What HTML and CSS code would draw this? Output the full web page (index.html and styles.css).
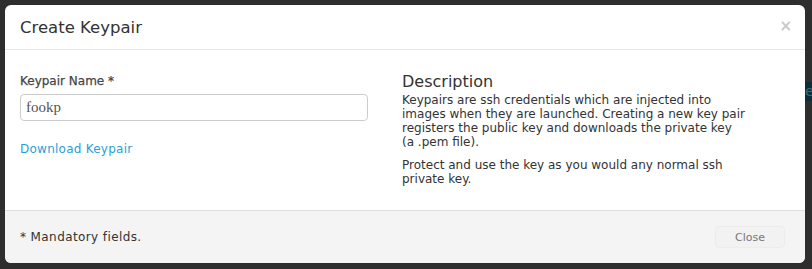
FILE: index.html
```html
<!DOCTYPE html>
<html lang="en">
<head>
    <meta charset="UTF-8">
    <meta name="viewport" content="width=device-width, initial-scale=1.0">
    <title>Create Keypair</title>
    <link rel="stylesheet" href="styles.css">
</head>
<body>

<div class="backdrop">
    <div class="behind-tab">e</div>
</div>

<div class="modal">
    <div class="modal-header">
        <h3>Create Keypair</h3>
        <a class="close" href="#">&times;</a>
    </div>
    <div class="modal-body">
        <div class="left">
            <div class="form-group">
                <label for="name">Keypair Name *</label>
                <input type="text" id="name" name="name" value="fookp">
            </div>
            <a class="download" href="#">Download Keypair</a>
        </div>
        <div class="right">
            <h3>Description</h3>
            <p>Keypairs are ssh credentials which are injected into<br>
                images when they are launched. Creating a new key pair<br>
                registers the public key and downloads the private key<br>
                (a .pem file).</p>
            <p>Protect and use the key as you would any normal ssh<br>
                private key.</p>
        </div>
    </div>
    <div class="modal-footer">
        <span class="note">* Mandatory fields.</span>
        <button class="btn">Close</button>
    </div>
</div>

</body>
</html>
```

FILE: styles.css
```css
body {
    font-family: "DejaVu Sans", Verdana, sans-serif;
    margin: 0;
    background-color: #2e2e2e;
    height: 269px;
    overflow: hidden;
    position: relative;
}

.backdrop {
    position: absolute;
    inset: 0;
}

.behind-tab {
    position: absolute;
    left: 805px;
    top: 82px;
    width: 7px;
    height: 19px;
    background: #0d2e38;
    color: #3b6b78;
    font-size: 14px;
    line-height: 19px;
}

.modal {
    position: relative;
    margin: 5px 0 0 5px;
    width: 800px;
    height: 258px;
    background: white;
    border-radius: 6px;
    overflow: hidden;
    display: flex;
    flex-direction: column;
}

.modal-header {
    height: 45px;
    padding: 0 15px;
    border-bottom: 1px solid #e8e8e8;
    display: flex;
    justify-content: space-between;
    align-items: center;
    box-sizing: border-box;
}

.modal-header h3 {
    margin: 0;
    font-size: 16.5px;
    font-weight: normal;
    color: #333;
}

.close {
    color: #c8c8c8;
    font-size: 15px;
    font-weight: bold;
    text-decoration: none;
    margin: -3px -2px 0 0;
}

.modal-body {
    flex: 1;
    display: flex;
    padding: 24px 15px 0;
    gap: 34px;
}

.left {
    width: 348px;
}

.form-group {
    margin-bottom: 17px;
}

label {
    display: block;
    font-size: 12px;
    color: #444;
    margin-bottom: 6px;
    -webkit-text-stroke: 0.25px #444;
}

input {
    width: 100%;
    height: 27px;
    padding: 0 5px;
    border: 1px solid #ccc;
    border-radius: 4px;
    box-sizing: border-box;
    font-family: "Liberation Serif", serif;
    font-size: 15px;
    color: #555;
}

.download {
    font-size: 12px;
    color: #2a9fd6;
    text-decoration: none;
    letter-spacing: 0.25px;
}

.right {
    flex: 1;
    margin-top: -3px;
}

.right h3 {
    margin: 0;
    font-size: 16px;
    font-weight: normal;
    color: #333;
    line-height: 22px;
}

.right p {
    margin: 0 0 9px;
    font-size: 12px;
    line-height: 14px;
    color: #333;
}

.modal-footer {
    height: 53px;
    padding: 0 20px 0 15px;
    background: #f4f4f4;
    border-top: 1px solid #ddd;
    display: flex;
    justify-content: space-between;
    align-items: center;
    box-sizing: border-box;
}

.note {
    font-size: 12px;
    color: #333;
    letter-spacing: 0.4px;
}

.btn {
    width: 70px;
    height: 22px;
    background: #f2f2f2;
    border: 1px solid #ececec;
    border-radius: 4px;
    color: #777;
    font-family: inherit;
    font-size: 11px;
    cursor: pointer;
}
```
